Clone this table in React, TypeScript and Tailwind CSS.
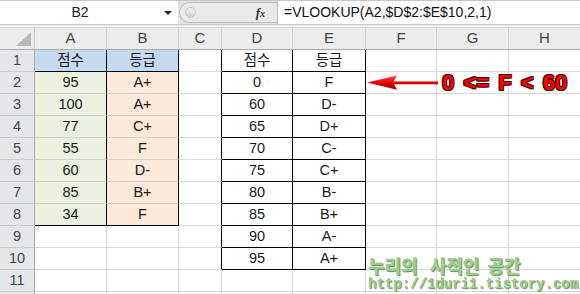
const COLS = ['A', 'B', 'C', 'D', 'E', 'F', 'G', 'H'];

// sheet contents by row (columns A..E)
const sheet: Record<number, string[]> = {
  1: ['점수', '등급', '', '점수', '등급'],
  2: ['95', 'A+', '', '0', 'F'],
  3: ['100', 'A+', '', '60', 'D-'],
  4: ['77', 'C+', '', '65', 'D+'],
  5: ['55', 'F', '', '70', 'C-'],
  6: ['60', 'D-', '', '75', 'C+'],
  7: ['85', 'B+', '', '80', 'B-'],
  8: ['34', 'F', '', '85', 'B+'],
  9: ['', '', '', '90', 'A-'],
  10: ['', '', '', '95', 'A+'],
};

const ROWS = [1, 2, 3, 4, 5, 6, 7, 8, 9, 10, 11, 12];

function cellClass(c: number, r: number) {
  const leftTable = c <= 1 && r <= 8;
  const rightTable = (c === 3 || c === 4) && r <= 10;
  const rightBlack = leftTable || rightTable || (c === 2 && r <= 10);
  const bottomBlack = (leftTable && (r === 1 || r === 8)) || rightTable;

  let bg = 'bg-white';
  if (c <= 1 && r === 1) bg = 'bg-[#c5d9f1]';
  else if (c === 0 && r <= 8) bg = 'bg-[#ebf1de]';
  else if (c === 1 && r <= 8) bg = 'bg-[#fde9d9]';

  const right = rightBlack ? 'border-r-black' : leftTable ? 'border-r-[#d0d0d0]' : 'border-r-[#d9d9d9]';
  const bottom = bottomBlack ? 'border-b-black' : leftTable ? 'border-b-[#d0d0d0]' : 'border-b-[#d9d9d9]';
  return `${bg} ${right} ${bottom}`;
}

function FormulaBar() {
  return (
    <div className="flex h-[25px] border-t border-b border-[#c6c6c6] bg-[#e3e3e3]">
      <div className="flex w-[178px] items-center bg-white">
        <div className="w-[160px] text-center text-[14px] text-[#222]">B2</div>
        <div className="ml-[4px] h-0 w-0 border-x-[4px] border-t-[4px] border-x-transparent border-t-[#222]" />
      </div>
      <div className="flex w-[99px] items-center pl-[1px]">
        <div className="flex h-[21px] w-full items-center justify-between rounded-l-full border border-r-0 border-[#bdbdbd] bg-[#e9e9e9] pl-[5px] pr-[12px]">
          <div className="h-[11px] w-[11px] rounded-full border border-[#c8c8c8] bg-gradient-to-b from-[#f4f4f4] to-[#cfcfcf]" />
          <span className="font-['Liberation_Serif',serif] text-[13px] font-bold italic text-[#333]">
            f<span className="text-[10px]">x</span>
          </span>
        </div>
      </div>
      <div className="flex flex-1 items-center border-l border-[#bdbdbd] bg-white pl-[6px] text-[14px] text-[#111]">
        =VLOOKUP(A2,$D$2:$E$10,2,1)
      </div>
    </div>
  );
}

export default function App() {
  return (
    <div className="relative h-[294px] w-[580px] overflow-hidden bg-white font-['Liberation_Sans','Noto_Sans_CJK_KR',sans-serif]">
      <FormulaBar />
      <div className="h-[3px] border-b border-[#d4d4d4] bg-[#f3f3f3]" />

      <div className="grid grid-cols-[35px_72px_72px_43px_71px_73px_71px_72px_72px]">
        {/* column headers */}
        <div className="relative h-[22px] border-r border-b border-r-[#c8c8c8] border-b-[#a9a9a9] bg-[#ececec]">
          <svg className="absolute right-[3px] bottom-[3px]" width="15" height="14" viewBox="0 0 15 14">
            <polygon points="15,0 15,14 0,14" fill="#b9b9b9" />
          </svg>
        </div>
        {COLS.map(col => (
          <div
            key={col}
            className="flex h-[22px] items-center justify-center border-r border-b border-r-[#cfcfcf] border-b-[#a9a9a9] bg-[#ececec] text-[15px] text-[#444]"
          >
            {col}
          </div>
        ))}

        {ROWS.map(r => (
          <div key={r} className="contents">
            <div className="flex h-[22px] items-center justify-center border-r border-b border-r-[#a9a9a9] border-b-[#cbcbcb] bg-[#e4e6ea] text-[14.5px] text-[#444]">
              {r <= 11 ? r : ''}
            </div>
            {COLS.map((col, c) => (
              <div
                key={col}
                className={`flex h-[22px] items-center justify-center border-r border-b text-[14.5px] leading-none text-[#1a1a1a] ${cellClass(c, r)}`}
              >
                {sheet[r]?.[c] ?? ''}
              </div>
            ))}
          </div>
        ))}
      </div>

      {/* arrow + note */}
      <svg className="absolute left-[366px] top-[75px]" width="72" height="16" viewBox="0 0 72 16">
        <defs>
          <linearGradient id="arrowRed" x1="0" y1="0" x2="0" y2="1">
            <stop offset="0" stopColor="#ff4a4a" />
            <stop offset="0.5" stopColor="#e80000" />
            <stop offset="1" stopColor="#9a0000" />
          </linearGradient>
        </defs>
        <rect x="26" y="6.5" width="46" height="2.8" fill="#e00000" />
        <polygon points="1,7.6 31,0.5 27,7.6 31,14.8" fill="url(#arrowRed)" />
      </svg>
      <div className="absolute left-[442px] top-[72px] whitespace-pre text-[22px] font-bold leading-none text-[#ff0000] [word-spacing:3px] [text-shadow:1px_1px_0_#3a0000,-1px_-1px_0_#3a0000,1px_-1px_0_#3a0000,-1px_1px_0_#3a0000]">
        0 {'<'}= F {'<'} 60
      </div>

      {/* blog watermark */}
      <div className="absolute left-[368px] top-[254px] text-[#9ccb93] [text-shadow:1px_1px_1px_#5d8f59]">
        <div className="flex h-[22px] font-['Noto_Sans_CJK_KR',sans-serif] text-[18px] font-black leading-[22px]">
          <span>누리의</span>
          <span className="ml-[12px]">사적인</span>
          <span className="ml-[8px]">공간</span>
        </div>
        <div className="font-['Liberation_Mono',monospace] text-[14px] font-bold leading-[16px]">
          http://1duri1.tistory.com
        </div>
      </div>
    </div>
  );
}
